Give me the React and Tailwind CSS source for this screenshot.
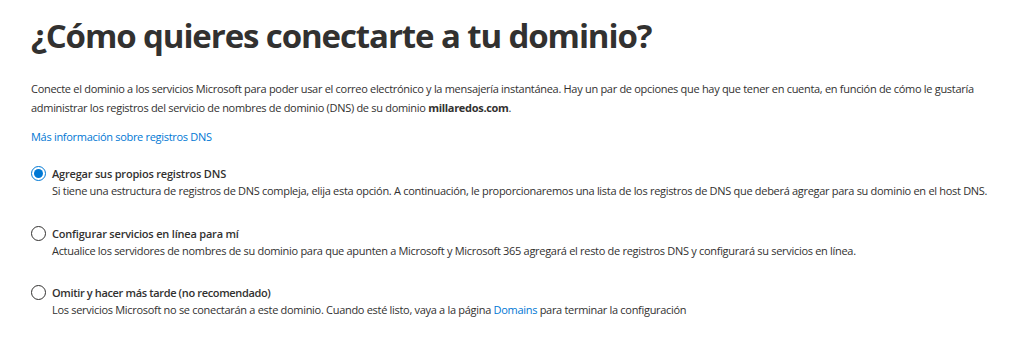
export default function App() {
  const font = { fontFamily: '"Open Sans", "Noto Sans", sans-serif' };
  const Radio = ({ checked }) => (
    <span
      className={
        "mt-[1px] flex h-[15px] w-[15px] shrink-0 items-center justify-center rounded-full border bg-white " +
        (checked ? "border-[#0078d4]" : "border-[#323130]")
      }
    >
      {checked && <span className="h-[9px] w-[9px] rounded-full bg-[#0078d4]" />}
    </span>
  );
  const Option = ({ checked, title, children, className, tight }) => (
    <div className={"flex gap-[6px] " + (className || "")}>
      <Radio checked={checked} />
      <div className="flex flex-col">
        <div
          className={
            "text-[11px] font-semibold leading-[17px] text-[#323130] " +
            (tight ? "tracking-[-0.35px]" : "tracking-[-0.2px]")
          }
        >
          {title}
        </div>
        <div className="whitespace-nowrap text-[11px] leading-[17px] tracking-[-0.3px] text-[#323130]">{children}</div>
      </div>
    </div>
  );
  return (
    <div className="h-[343px] w-[1024px] overflow-hidden bg-white pl-[31px] pt-[14px]" style={font}>
      <h1 className="text-[33px] font-bold leading-[44px] tracking-[-1.1px] text-[#323130]">
        ¿Cómo quieres conectarte a tu dominio?
      </h1>
      <p className="mt-[21px] w-[975px] text-[11px] leading-[19px] tracking-[-0.3px] text-[#323130]">
        Conecte el dominio a los servicios Microsoft para poder usar el correo electrónico y la mensajería instantánea. Hay un par de opciones que hay que tener en cuenta, en función de cómo le gustaría administrar los registros del servicio de nombres de dominio (DNS) de su dominio <b className="font-bold">millaredos.com</b>.
      </p>
      <a className="mt-[10px] block text-[11px] leading-[19px] tracking-[-0.3px] text-[#0078d4]">Más información sobre registros DNS</a>
      <Option className="mt-[19px]" checked title="Agregar sus propios registros DNS">
        Si tiene una estructura de registros de DNS compleja, elija esta opción. A continuación, le proporcionaremos una lista de los registros de DNS que deberá agregar para su dominio en el host DNS.
      </Option>
      <Option className="mt-[26px]" title="Configurar servicios en línea para mí">
        Actualice los servidores de nombres de su dominio para que apunten a Microsoft y Microsoft 365 agregará el resto de registros DNS y configurará su servicios en línea.
      </Option>
      <Option className="mt-[25px]" tight title="Omitir y hacer más tarde (no recomendado)">
        Los servicios Microsoft no se conectarán a este dominio. Cuando esté listo, vaya a la página <span className="text-[#0078d4]">Domains</span> para terminar la configuración
      </Option>
    </div>
  );
}
